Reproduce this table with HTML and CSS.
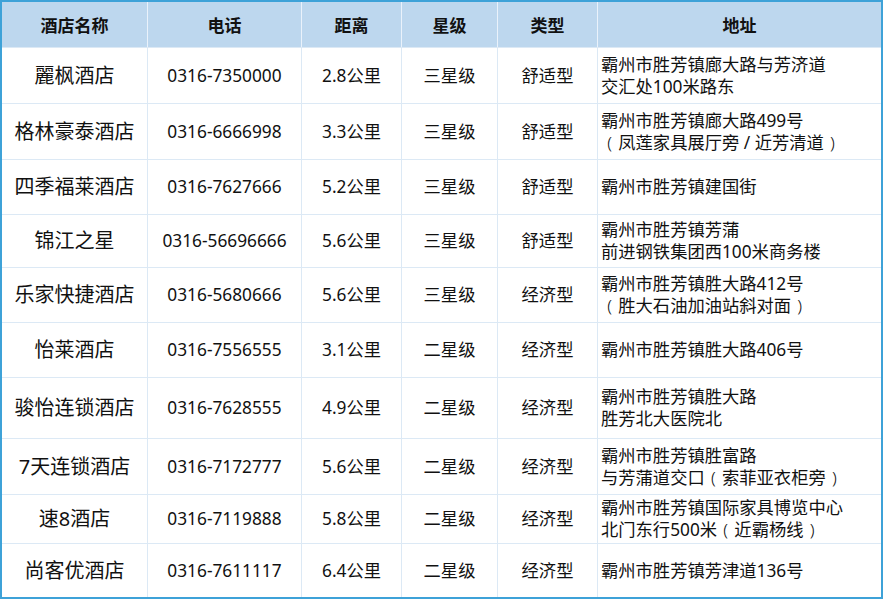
FILE: index.html
```html
<!DOCTYPE html>
<html lang="zh-CN">
<head>
<meta charset="utf-8">
<title>酒店列表</title>
<link rel="stylesheet" href="styles.css">
</head>
<body>
<div class="frame">
  <div class="grid">
    <div class="h">酒店名称</div><div class="h">电话</div><div class="h">距离</div><div class="h">星级</div><div class="h">类型</div><div class="h last">地址</div>

    <div class="c name">麗枫酒店</div><div class="c">0316-7350000</div><div class="c">2.8公里</div><div class="c">三星级</div><div class="c">舒适型</div><div class="c addr"><span class="t">霸州市胜芳镇廊大路与芳济道<br>交汇处100米路东</span></div>

    <div class="c name">格林豪泰酒店</div><div class="c">0316-6666998</div><div class="c">3.3公里</div><div class="c">三星级</div><div class="c">舒适型</div><div class="c addr"><span class="t">霸州市胜芳镇廊大路499号<br><span class="p">(</span>凤莲家具展厅旁 / 近芳清道<span class="p">)</span></span></div>

    <div class="c name">四季福莱酒店</div><div class="c">0316-7627666</div><div class="c">5.2公里</div><div class="c">三星级</div><div class="c">舒适型</div><div class="c addr"><span class="t">霸州市胜芳镇建国街</span></div>

    <div class="c name">锦江之星</div><div class="c">0316-56696666</div><div class="c">5.6公里</div><div class="c">三星级</div><div class="c">舒适型</div><div class="c addr"><span class="t">霸州市胜芳镇芳蒲<br>前进钢铁集团西100米商务楼</span></div>

    <div class="c name">乐家快捷酒店</div><div class="c">0316-5680666</div><div class="c">5.6公里</div><div class="c">三星级</div><div class="c">经济型</div><div class="c addr"><span class="t">霸州市胜芳镇胜大路412号<br><span class="p">(</span>胜大石油加油站斜对面<span class="p">)</span></span></div>

    <div class="c name">怡莱酒店</div><div class="c">0316-7556555</div><div class="c">3.1公里</div><div class="c">二星级</div><div class="c">经济型</div><div class="c addr"><span class="t">霸州市胜芳镇胜大路406号</span></div>

    <div class="c name">骏怡连锁酒店</div><div class="c">0316-7628555</div><div class="c">4.9公里</div><div class="c">二星级</div><div class="c">经济型</div><div class="c addr"><span class="t">霸州市胜芳镇胜大路<br>胜芳北大医院北</span></div>

    <div class="c name">7天连锁酒店</div><div class="c">0316-7172777</div><div class="c">5.6公里</div><div class="c">二星级</div><div class="c">经济型</div><div class="c addr"><span class="t">霸州市胜芳镇胜富路<br>与芳蒲道交口<span class="p">(</span>索菲亚衣柜旁<span class="p">)</span></span></div>

    <div class="c name">速8酒店</div><div class="c">0316-7119888</div><div class="c">5.8公里</div><div class="c">二星级</div><div class="c">经济型</div><div class="c addr"><span class="t">霸州市胜芳镇国际家具博览中心<br>北门东行500米<span class="p">(</span>近霸杨线<span class="p">)</span></span></div>

    <div class="c name">尚客优酒店</div><div class="c">0316-7611117</div><div class="c">6.4公里</div><div class="c">二星级</div><div class="c">经济型</div><div class="c addr"><span class="t">霸州市胜芳镇芳津道136号</span></div>
  </div>
</div>
</body>
</html>
```

FILE: styles.css
```css
html, body {
  margin: 0;
  padding: 0;
  background: #ffffff;
}

body {
  width: 884px;
  height: 600px;
  overflow: hidden;
  font-family: "Noto Sans", "Noto Sans CJK SC", sans-serif;
  color: #111111;
}

.frame {
  width: 879px;
  height: 595px;
  border: 2px solid #3ea2d8;
}

.grid {
  display: grid;
  grid-template-columns: 145px 153px 99px 95px 99px 283px;
  grid-template-rows: 45px 55px 55px 54px 52px 54px 54px 60px 55px 48px 53px;
  gap: 1px;
  background: #dce9f5;
  height: 595px;
}

.h {
  background: #bdd7ee;
  font-weight: bold;
  font-size: 17px;
  display: flex;
  align-items: center;
  justify-content: center;
  box-shadow: 1px 0 0 #eaf2fb;
}

.h.last {
  box-shadow: none;
}

.c {
  background: #ffffff;
  font-size: 17.3px;
  display: flex;
  align-items: center;
  justify-content: center;
  line-height: 22px;
  white-space: nowrap;
}

.c.name {
  font-size: 20px;
}

.c.addr {
  justify-content: flex-start;
  padding-left: 3px;
}

.t {
  display: block;
  text-align: left;
}

.p {
  display: inline-block;
  width: 1em;
  text-align: center;
  font-weight: 300;
}
```
